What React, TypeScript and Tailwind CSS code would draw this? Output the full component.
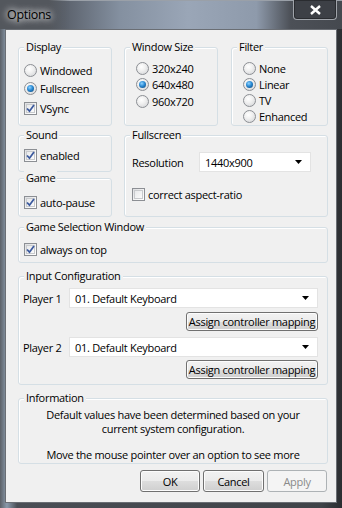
import React from "react";

const font = { fontFamily: '"Open Sans", "Noto Sans", sans-serif' };

const T = "text-[11px] tracking-[-0.3px] leading-none whitespace-nowrap";

function Radio({ checked, label }: { checked?: boolean; label: string }) {
  return (
    <div className="flex items-center h-[16px]">
      <span className="relative flex items-center justify-center w-[13px] h-[13px] rounded-full border border-[#8c8f94] bg-[radial-gradient(circle_at_40%_35%,#ffffff_0%,#f0f0f0_40%,#cfd1d4_100%)]">
        {checked && (
          <span className="w-[7px] h-[7px] rounded-full bg-[radial-gradient(circle_at_40%_35%,#8fd3ff_0%,#2a8ad4_45%,#0a3d6e_100%)]" />
        )}
      </span>
      <span className={"ml-[3px] text-black " + T}>{label}</span>
    </div>
  );
}

function Check({ checked, label }: { checked?: boolean; label: string }) {
  return (
    <div className="flex items-center h-[16px]">
      <span className="relative flex items-center justify-center w-[13px] h-[13px] border border-[#8c8f94] bg-[linear-gradient(135deg,#dcdde0_0%,#f6f6f6_60%,#ffffff_100%)]">
        <span className="absolute inset-[1px] border border-[#c8cacd] bg-[linear-gradient(135deg,#e8e9eb,#fbfbfb)]" />
        {checked && (
          <svg className="relative" width="9" height="9" viewBox="0 0 9 9">
            <path d="M1 4.5 L3.5 7.2 L8 1" fill="none" stroke="#3c5a9e" strokeWidth="1.8" />
          </svg>
        )}
      </span>
      <span className={"ml-[3px] text-black " + T}>{label}</span>
    </div>
  );
}

function Group({
  label,
  className,
  children,
}: {
  label: string;
  className: string;
  children?: React.ReactNode;
}) {
  return (
    <div
      className={
        "relative rounded-[3px] border border-[#d5dfe5] shadow-[inset_1px_1px_0_#ffffff] " +
        className
      }
    >
      <span className="absolute left-[5px] top-[-8px] px-[2px] bg-[#f0f0f0] text-[11px] tracking-[-0.3px] leading-[14px] whitespace-nowrap text-black">
        {label}
      </span>
      {children}
    </div>
  );
}

function Select({ value, className }: { value: string; className: string }) {
  return (
    <div
      className={
        "flex items-center justify-between bg-white border border-[#e3e3e3] pl-[5px] pr-[8px] " +
        className
      }
    >
      <span className={"text-black " + T}>{value}</span>
      <svg width="7" height="4" viewBox="0 0 7 4">
        <path d="M0 0 L7 0 L3.5 4 Z" fill="#000" />
      </svg>
    </div>
  );
}

function Btn({
  label,
  className,
  disabled,
}: {
  label: string;
  className: string;
  disabled?: boolean;
}) {
  return (
    <div
      className={
        "flex items-center justify-center rounded-[3px] border " +
        T +
        " " +
        (disabled
          ? "border-[#adb2b5] bg-[#f4f4f4] text-[#8a8a8a] "
          : "border-[#707070] bg-[linear-gradient(#f2f2f2_0%,#ebebeb_50%,#dddddd_51%,#cfcfcf_100%)] text-black shadow-[inset_0_0_0_1px_#fcfcfc] ") +
        className
      }
    >
      {label}
    </div>
  );
}

export default function App() {
  return (
    <div
      style={font}
      className="relative w-[342px] h-[508px] bg-[linear-gradient(90deg,#5b6067_0%,#8a9aab_2%,#4a4e55_5%,#3f4348_94%,#2b2d31_100%)] pt-[29px] pl-[5px] overflow-hidden"
    >
      {/* title bar blur */}
      <div className="absolute left-0 top-0 w-[342px] h-[29px] border-t border-[#9aa0a8] bg-[linear-gradient(90deg,#50555c_0%,#5e6570_20%,#8490a0_35%,#9aa6b7_55%,#8e9aab_75%,#4c5057_85%,#45494f_100%)]" />
      <div className="absolute left-0 top-0 w-[70px] h-[29px] bg-[linear-gradient(90deg,#53575d,#53575d_70%,transparent)]" />
      <span className="absolute left-[7px] top-[6px] text-[12.5px] tracking-[-0.3px] leading-[18px] text-black [text-shadow:0_0_6px_#ffffff,0_0_8px_#ffffff]">
        Options
      </span>
      {/* close button */}
      <div className="absolute left-[293px] top-0 w-[44px] h-[20px] rounded-b-[4px] border border-t-0 border-[#a0a4aa] bg-[#3d4046] shadow-[inset_0_0_0_1px_#2a2c30] flex items-center justify-center">
        <svg width="11" height="10" viewBox="0 0 11 10">
          <path d="M1 1 L10 9 M10 1 L1 9" stroke="#ffffff" strokeWidth="2.4" />
        </svg>
      </div>

      <div className="relative w-[332px] h-[474px] bg-[#f0f0f0] border border-[#6a6e74] pl-[12px] pr-[8px] pt-[17px] text-black">
        {/* Row 1 */}
        <div className="flex h-[79px]">
          <Group label="Display" className="w-[94px] h-[79px] pl-[5px] pt-[14px]">
            <div className="flex flex-col gap-[2px]">
              <Radio label="Windowed" />
              <Radio label="Fullscreen" checked />
              <div className="mt-[2px]">
                <Check label="VSync" checked />
              </div>
            </div>
          </Group>
          <Group label="Window Size" className="ml-[12px] w-[94px] h-[79px] pl-[11px] pt-[12px]">
            <div className="flex flex-col gap-[0.5px]">
              <Radio label="320x240" />
              <Radio label="640x480" checked />
              <Radio label="960x720" />
            </div>
          </Group>
          <Group label="Filter" className="ml-[13px] w-[97px] h-[79px] pl-[11px] pt-[12px]">
            <div className="flex flex-col gap-0">
              <Radio label="None" />
              <Radio label="Linear" checked />
              <Radio label="TV" />
              <Radio label="Enhanced" />
            </div>
          </Group>
        </div>

        {/* Row 2 */}
        <div className="flex mt-[9px] h-[82px]">
          <div className="flex flex-col w-[94px]">
            <Group label="Sound" className="h-[37px] pl-[5px] pt-[11px]">
              <Check label="enabled" checked />
            </Group>
            <Group label="Game" className="mt-[6px] h-[39px] pl-[5px] pt-[15px]">
              <Check label="auto-pause" checked />
            </Group>
          </div>
          <Group label="Fullscreen" className="ml-[12px] w-[204px] h-[82px] pl-[7px] pt-[16px]">
            <div className="flex items-center">
              <span className={"w-[67px] " + T}>Resolution</span>
              <Select value="1440x900" className="w-[112px] h-[20px]" />
            </div>
            <div className="mt-[14px]">
              <Check label="correct aspect-ratio" />
            </div>
          </Group>
        </div>

        {/* Row 3 */}
        <Group label="Game Selection Window" className="mt-[10px] h-[36px] pl-[5px] pt-[13px]">
          <Check label="always on top" checked />
        </Group>

        {/* Row 4 */}
        <Group label="Input Configuration" className="mt-[13px] h-[109px] pl-[4px] pr-[9px] pt-[11px]">
          <div className="flex items-center">
            <span className={"w-[46px] " + T}>Player 1</span>
            <Select value="01. Default Keyboard" className="flex-1 h-[20px]" />
          </div>
          <div className="flex justify-end mt-[4px]">
            <Btn label="Assign controller mapping" className="w-[132px] h-[19px]" />
          </div>
          <div className="flex items-center mt-[6px]">
            <span className={"w-[46px] " + T}>Player 2</span>
            <Select value="01. Default Keyboard" className="flex-1 h-[20px]" />
          </div>
          <div className="flex justify-end mt-[3px]">
            <Btn label="Assign controller mapping" className="w-[132px] h-[19px]" />
          </div>
        </Group>

        {/* Row 5 */}
        <Group label="Information" className="mt-[13px] h-[66px] pt-[9px]">
          <div className="flex flex-col items-center text-[11px] tracking-[-0.3px] leading-[14px] whitespace-nowrap">
            <div className="h-[14px]">Default values have been determined based on your</div>
            <div className="h-[14px]">current system configuration.</div>
            <div className="h-[12px]" />
            <div className="h-[14px]">Move the mouse pointer over an option to see more</div>
          </div>
        </Group>

        {/* Buttons */}
        <div className="flex justify-end gap-[3px] mt-[6px] pr-[1px]">
          <Btn label="OK" className="w-[60px] h-[22px]" />
          <Btn label="Cancel" className="w-[61px] h-[22px]" />
          <Btn label="Apply" className="w-[60px] h-[22px]" disabled />
        </div>
      </div>
    </div>
  );
}
